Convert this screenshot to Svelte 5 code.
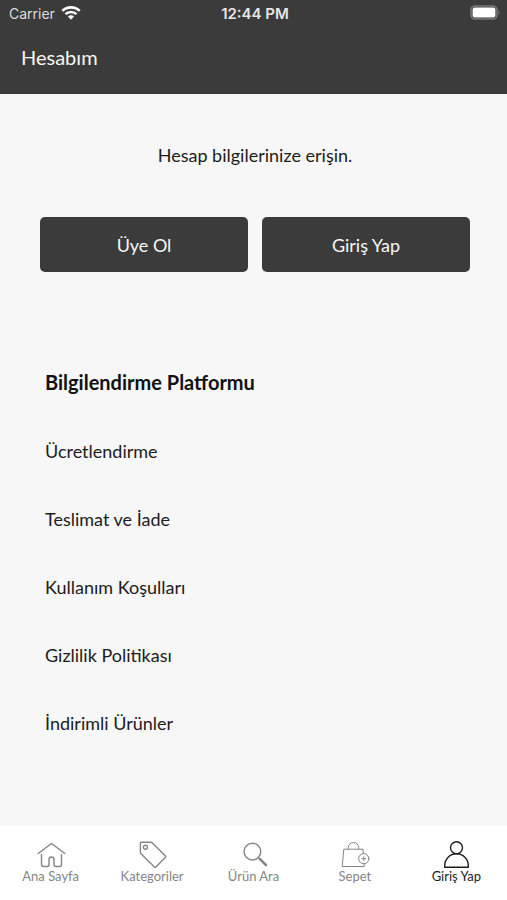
<script>
  let active = $state("giris");

  const links = [
    "Ücretlendirme",
    "Teslimat ve İade",
    "Kullanım Koşulları",
    "Gizlilik Politikası",
    "İndirimli Ürünler",
  ];

  const tabs = [
    { id: "anasayfa", label: "Ana Sayfa" },
    { id: "kategoriler", label: "Kategoriler" },
    { id: "ara", label: "Ürün Ara" },
    { id: "sepet", label: "Sepet" },
    { id: "giris", label: "Giriş Yap" },
  ];
</script>

<div class="screen" lang="tr">
  <header>
    <div class="status">
      <div class="carrier">
        <span>Carrier</span>
        <svg width="20" height="16" viewBox="0 0 20 16" aria-hidden="true">
          <g fill="none" stroke="#fff" stroke-width="2.6">
            <path d="M1.3 5.9a12.4 12.4 0 0 1 17.4 0" />
            <path d="M4.5 9.2a7.8 7.8 0 0 1 11 0" />
          </g>
          <path d="M10 14.8 6.9 11.6a4.4 4.4 0 0 1 6.2 0z" fill="#fff" />
        </svg>
      </div>
      <time>12:44 PM</time>
      <svg class="battery" width="31" height="16" viewBox="0 0 31 16" aria-hidden="true">
        <rect x="1" y="1" width="26" height="13" rx="4" fill="none" stroke="#777" stroke-width="1.6" />
        <rect x="2.6" y="2.6" width="22.8" height="9.8" rx="2" fill="#fff" />
        <path d="M28.6 5.2q2.4 2.3 0 4.6z" fill="#777" />
      </svg>
    </div>
    <h1>Hesabım</h1>
  </header>

  <main>
    <p>Hesap bilgilerinize erişin.</p>
    <div class="actions">
      <button type="button">Üye Ol</button>
      <button type="button">Giriş Yap</button>
    </div>

    <section>
      <h2>Bilgilendirme Platformu</h2>
      <ul>
        {#each links as link}
          <li><a href="#bilgi">{link}</a></li>
        {/each}
      </ul>
    </section>
  </main>

  <nav>
    {#each tabs as tab}
      <button type="button" class:active={active === tab.id} onclick={() => (active = tab.id)}>
        <svg width="32" height="30" viewBox="0 0 32 30" aria-hidden="true">
          {#if tab.id === "anasayfa"}
            <path d="M3.2 14.5 16.5 4.5l13.3 10" />
            <path d="M6.5 15.5v10q0 2 2 2H12q2 0 2-2v-5a2.5 2.5 0 0 1 5 0v5q0 2 2 2h3.5q2 0 2-2v-10" />
          {:else if tab.id === "kategoriler"}
            <path d="M5.2 3.3h9.8q.8 0 1.4.6l12.9 12.9q.8.8 0 1.6l-9.4 9.6q-.8.7-1.5 0L5 14.8q-.6-.6-.6-1.4V4.1q0-.8.8-.8z" />
            <circle cx="9.4" cy="8.2" r="2" />
          {:else if tab.id === "ara"}
            <circle cx="15.4" cy="12.6" r="8.4" />
            <path d="m21.5 18.6 1.5 1.5" />
            <path class="handle" d="m23 20.1 6 6" />
          {:else if tab.id === "sepet"}
            <g class="thin">
              <path d="M24.2 14.5 24 10.2H4.8L3.2 27.5h22v-2.6" />
              <path d="M9.3 10V8.7a5.2 5.2 0 0 1 10.4 0V10" />
              <circle cx="24.8" cy="19.7" r="5.1" />
              <path d="M22.8 19.7h4M24.8 17.7v4" />
            </g>
          {:else}
            <circle cx="16.5" cy="8.7" r="6" />
            <path d="M4.7 28.2v-1.6a11.8 11.8 0 0 1 23.6 0v1.6z" />
          {/if}
        </svg>
        <span>{tab.label}</span>
      </button>
    {/each}
  </nav>
</div>

<style>
  :global(body) {
    margin: 0;
    background: #f7f7f7;
  }

  .screen {
    display: flex;
    flex-direction: column;
    min-height: 100vh;
    font-family: Lato, "Open Sans", sans-serif;
    color: #1c1c1c;
  }

  header {
    background: #3b3b3b;
    color: #f7f7f7;
    padding-bottom: 23px;
  }

  .status {
    display: grid;
    grid-template-columns: 1fr auto 1fr;
    align-items: center;
    height: 26px;
    padding: 0 6px 0 9px;
    font-family: Inter, "Liberation Sans", sans-serif;
    font-size: 14px;
  }

  .carrier {
    display: flex;
    align-items: center;
    gap: 6px;
    color: #dcdcdc;
  }

  time {
    font-size: 15px;
    font-weight: 600;
    color: #e6e6e6;
  }

  .battery {
    justify-self: end;
  }

  h1 {
    margin: 17px 21px 0;
    font-size: 20px;
    line-height: 28px;
    font-weight: 400;
  }

  main {
    flex: 1;
    padding: 0 37px 0 40px;
  }

  p {
    margin: 49px 0 0;
    font-size: 18px;
    line-height: 24px;
    text-align: center;
  }

  .actions {
    display: flex;
    gap: 14px;
    margin-top: 50px;
  }

  .actions button {
    flex: 1;
    height: 55px;
    border: none;
    border-radius: 5px;
    background: #3b3b3b;
    color: #f7f7f7;
    font: inherit;
    font-size: 18px;
  }

  section {
    margin-top: 96px;
    padding-left: 5px;
  }

  h2 {
    margin: 0;
    font-size: 20px;
    line-height: 28px;
    font-weight: 700;
    color: #111;
  }

  ul {
    list-style: none;
    margin: 43px 0 0;
    padding: 0;
    display: grid;
    gap: 44px;
  }

  li {
    font-size: 18px;
    line-height: 24px;
  }

  a {
    color: inherit;
    text-decoration: none;
  }

  nav {
    display: grid;
    grid-template-columns: repeat(5, 1fr);
    height: 74px;
    background: #fff;
  }

  nav button {
    display: flex;
    flex-direction: column;
    align-items: center;
    padding: 13px 0 0;
    border: none;
    background: none;
    color: #858585;
    font: inherit;
    font-size: 13px;
    line-height: 14px;
  }

  nav svg {
    fill: none;
    stroke: currentColor;
    stroke-width: 1.4;
    stroke-linecap: round;
    stroke-linejoin: round;
  }

  .handle {
    stroke-width: 2.6;
  }

  .thin {
    stroke-width: 1;
  }

  nav .active {
    color: #1c1c1c;
  }
</style>
